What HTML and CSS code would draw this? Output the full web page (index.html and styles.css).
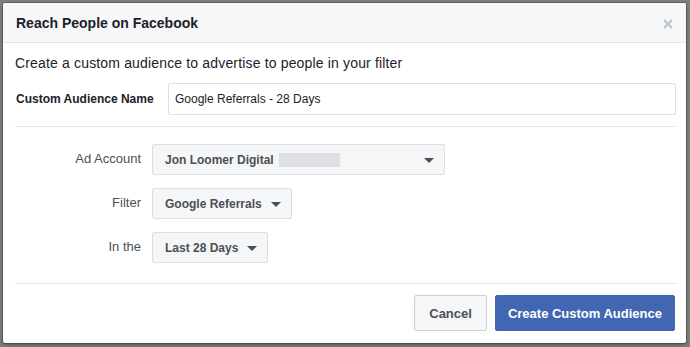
FILE: index.html
```html
<!DOCTYPE html>
<html>
<head>
<meta charset="utf-8" />
<title>Reach People on Facebook</title>
<link rel="stylesheet" href="styles.css">
</head>
<body>
  <div class="dialog">
    <div class="dialogtitle">
      <span>Reach People on Facebook</span>
      <svg class="close" width="10" height="10" viewBox="0 0 10 10">
        <path d="M1 1 L9 9 M9 1 L1 9" stroke="#bec2c9" stroke-width="2" />
      </svg>
    </div>

    <div class="dialogbody">
      <p class="intro">Create a custom audience to advertise to people in your filter</p>

      <div class="namerow">
        <label class="namelabel">Custom Audience Name</label>
        <div class="nameinput">Google Referrals - 28 Days</div>
      </div>

      <div class="divider"></div>

      <div class="fields">
        <div class="fieldlabel">Ad Account</div>
        <div class="select wide">
          <span>Jon Loomer Digital</span>
          <span class="blur"></span>
          <span class="fill"></span>
          <span class="arrow"></span>
        </div>

        <div class="fieldlabel">Filter</div>
        <div class="select">
          <span>Google Referrals</span>
          <span class="arrow"></span>
        </div>

        <div class="fieldlabel">In the</div>
        <div class="select">
          <span>Last 28 Days</span>
          <span class="arrow"></span>
        </div>
      </div>

      <div class="divider lower"></div>

      <div class="buttons">
        <button class="btn">Cancel</button>
        <button class="btn primary">Create Custom Audience</button>
      </div>
    </div>
  </div>
</body>
</html>
```

FILE: styles.css
```css
html, body {
  margin: 0;
  padding: 0;
}

body {
  background: #7f7f7f;
  font-family: "Liberation Sans", Arial, sans-serif;
  color: #1d2129;
  width: 690px;
  height: 347px;
  overflow: hidden;
}

.dialog {
  margin: 3px 0 0 3px;
  width: 683px;
  height: 340px;
  background: #fff;
  box-shadow: 0 0 0 1px rgba(0, 0, 0, .2), 0 2px 4px rgba(0, 0, 0, .3);
  border-radius: 2px;
  display: flex;
  flex-direction: column;
}

.dialogtitle {
  height: 39px;
  background: #f6f7f9;
  border-bottom: 1px solid #e5e5e5;
  border-radius: 2px 2px 0 0;
  display: flex;
  align-items: center;
  justify-content: space-between;
  padding: 0 13px 0 13px;
  font-size: 14px;
  font-weight: bold;
}

.close {
  margin-top: 2px;
}

.dialogbody {
  padding: 0 10px 0 12px;
  display: flex;
  flex-direction: column;
}

.intro {
  margin: 10px 0 0 0;
  font-size: 14px;
  line-height: 20px;
  letter-spacing: .16px;
}

.namerow {
  margin-top: 10px;
  display: flex;
  align-items: center;
  gap: 12px;
}

.namelabel {
  width: 140px;
  padding-left: 1px;
  font-size: 12px;
  font-weight: bold;
}

.nameinput {
  flex: 1;
  height: 30px;
  border: 1px solid #dddfe2;
  border-radius: 2px;
  padding-left: 6px;
  font-size: 12px;
  line-height: 30px;
}

.divider {
  margin-top: 11px;
  height: 1px;
  background: #e5e5e5;
}

.fields {
  margin-top: 17px;
  display: grid;
  grid-template-columns: 126px auto;
  column-gap: 11px;
  row-gap: 13px;
  justify-items: start;
}

.fieldlabel {
  justify-self: end;
  align-self: center;
  font-size: 13px;
  color: #4b4f56;
  padding-bottom: 2px;
}

.select {
  height: 29px;
  border: 1px solid #dddfe2;
  border-radius: 2px;
  background: #f5f6f7;
  display: flex;
  align-items: center;
  padding: 0 10px 0 12px;
  font-size: 12px;
  font-weight: bold;
  color: #4b4f56;
}

.select.wide {
  width: 269px;
}

.blur {
  width: 61px;
  height: 14px;
  background: #dddfe2;
  margin-left: 5px;
}

.fill {
  flex: 1;
}

.arrow {
  width: 0;
  height: 0;
  border-left: 5px solid transparent;
  border-right: 5px solid transparent;
  border-top: 5px solid #4b4f56;
  margin-left: 9px;
  margin-top: 1px;
}

.divider.lower {
  margin-top: 20px;
}

.buttons {
  margin-top: 11px;
  display: flex;
  justify-content: flex-end;
  gap: 8px;
  padding-right: 1px;
}

.btn {
  height: 36px;
  border: 1px solid #ccd0d5;
  border-radius: 2px;
  background: #f5f6f7;
  color: #4b4f56;
  font-family: "Liberation Sans", Arial, sans-serif;
  font-size: 13px;
  font-weight: bold;
  padding: 0 14px;
}

.btn.primary {
  background: #4267b2;
  border-color: #4267b2;
  color: #fff;
  padding: 0 12px;
}
```
